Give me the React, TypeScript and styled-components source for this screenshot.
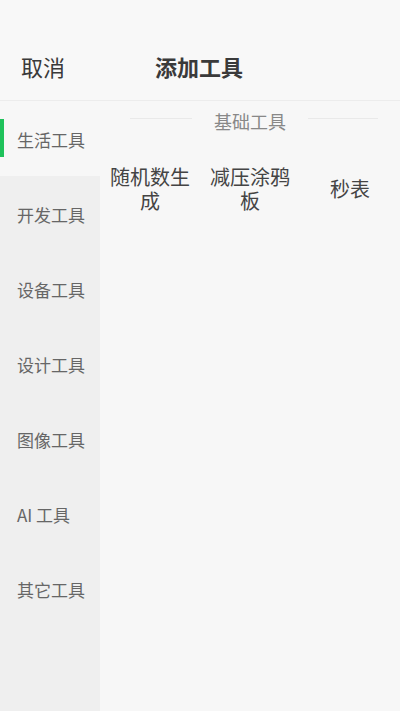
import React from 'react';
import styled, { createGlobalStyle } from 'styled-components';

const categories = ['生活工具', '开发工具', '设备工具', '设计工具', '图像工具', 'AI 工具', '其它工具'];
const tools = ['随机数生成', '减压涂鸦板', '秒表'];

const App: React.FC = () => {
  return (
    <>
      <GlobalStyle />
      <Page>
        <Header>
          <Cancel>取消</Cancel>
          <Title>添加工具</Title>
        </Header>
        <Body>
          <Sidebar>
            {categories.map((c, i) => (
              <NavItem key={c} $active={i === 0}>
                {c}
              </NavItem>
            ))}
          </Sidebar>
          <Content>
            <SectionTitle>
              <Line $width="62px" />
              <span>基础工具</span>
              <Line />
            </SectionTitle>
            <ToolGrid>
              {tools.map((t) => (
                <ToolItem key={t}>{t}</ToolItem>
              ))}
            </ToolGrid>
          </Content>
        </Body>
      </Page>
    </>
  );
};

export default App;

const GlobalStyle = createGlobalStyle`
  html, body {
    margin: 0;
    padding: 0;
    background: #f7f7f7;
  }
  body {
    font-family: "Noto Sans CJK SC", "Noto Sans", sans-serif;
  }
`;

const Page = styled.div`
  width: 400px;
  height: 711px;
  display: flex;
  flex-direction: column;
  background: #f7f7f7;
  overflow: hidden;
`;

const Header = styled.div`
  height: 101px;
  box-sizing: border-box;
  border-bottom: 1px solid #ececec;
  background: #f8f8f8;
  display: flex;
  align-items: flex-end;
  padding: 0 0 19px 21px;
`;

const Cancel = styled.div`
  font-size: 22px;
  line-height: 30px;
  color: #3a3a3a;
  width: 134px;
`;

const Title = styled.div`
  font-size: 22px;
  line-height: 30px;
  font-weight: 700;
  color: #3a3a3a;
`;

const Body = styled.div`
  flex: 1;
  display: flex;
`;

const Sidebar = styled.div`
  width: 100px;
  background: #efefef;
  display: flex;
  flex-direction: column;
`;

const NavItem = styled.div<{ $active?: boolean }>`
  height: 75px;
  display: flex;
  align-items: center;
  padding: 1px 0 0 17px;
  box-sizing: border-box;
  font-size: 17px;
  color: #666;
  position: relative;
  background: ${(p) => (p.$active ? '#f7f7f7' : 'transparent')};

  &::before {
    content: '';
    display: ${(p) => (p.$active ? 'block' : 'none')};
    position: absolute;
    left: 0;
    top: 18px;
    width: 4px;
    height: 38px;
    background: #1fc25b;
  }
`;

const Content = styled.div`
  flex: 1;
  display: flex;
  flex-direction: column;
`;

const SectionTitle = styled.div`
  display: flex;
  align-items: center;
  gap: 22px;
  padding: 8px 22px 0 30px;
  font-size: 18px;
  line-height: 24px;
  color: #888;
`;

const Line = styled.div<{ $width?: string }>`
  flex: ${(p) => (p.$width ? `0 0 ${p.$width}` : '1')};
  height: 1px;
  background: #e9e9e9;
  margin-top: -5px;
`;

const ToolGrid = styled.div`
  display: grid;
  grid-template-columns: repeat(3, 100px);
  margin-top: 28px;
`;

const ToolItem = styled.div`
  height: 72px;
  display: flex;
  align-items: center;
  justify-content: center;
  padding: 0 10px;
  text-align: center;
  font-size: 20px;
  line-height: 24px;
  color: #444;
  align-self: start;
  margin-top: -8px;
`;
